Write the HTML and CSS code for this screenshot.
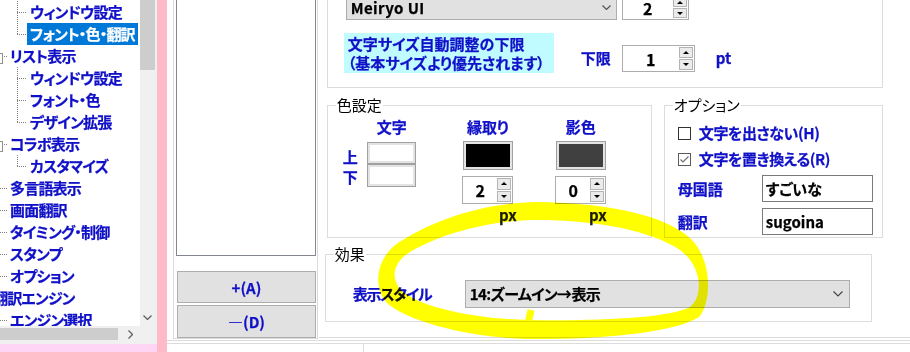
FILE: index.html
```html
<!DOCTYPE html>
<html lang="ja">
<head>
<meta charset="utf-8">
<link rel="stylesheet" href="styles.css">
</head>
<body>
<div class="window">
    <div class="nav">
        <div class="nav-view">
            <div class="tree">
                <div class="row lv2"><span class="elbow"></span><span class="label">ウィンドウ設定</span></div>
                <div class="row lv2"><span class="elbow last"></span><span class="label selected">フォント・色・翻訳</span></div>
                <div class="row lv1"><span class="elbow box"></span><span class="label">リスト表示</span></div>
                <div class="row lv2"><span class="elbow"></span><span class="label">ウィンドウ設定</span></div>
                <div class="row lv2"><span class="elbow"></span><span class="label">フォント・色</span></div>
                <div class="row lv2"><span class="elbow last"></span><span class="label">デザイン拡張</span></div>
                <div class="row lv1"><span class="elbow box"></span><span class="label">コラボ表示</span></div>
                <div class="row lv2"><span class="elbow last"></span><span class="label">カスタマイズ</span></div>
                <div class="row lv1"><span class="elbow"></span><span class="label">多言語表示</span></div>
                <div class="row lv1"><span class="elbow"></span><span class="label">画面翻訳</span></div>
                <div class="row lv1"><span class="elbow"></span><span class="label">タイミング・制御</span></div>
                <div class="row lv1"><span class="elbow"></span><span class="label">スタンプ</span></div>
                <div class="row lv1"><span class="elbow last"></span><span class="label">オプション</span></div>
                <div class="row lv0"><span class="label">翻訳エンジン</span></div>
                <div class="row lv1"><span class="elbow"></span><span class="label">エンジン選択</span></div>
            </div>
            <div class="vscroll">
                <div class="vthumb"></div>
                <svg class="vdown" width="9" height="5" viewBox="0 0 9 5"><polyline points="0.5,0.5 4.5,4.5 8.5,0.5" fill="none" stroke="#606060" stroke-width="1.3"/></svg>
            </div>
        </div>
        <div class="hscroll">
            <div class="htrack">
                <div class="hthumb"></div>
                <svg class="hright" width="5" height="9" viewBox="0 0 5 9"><polyline points="0.5,0.5 4.5,4.5 0.5,8.5" fill="none" stroke="#606060" stroke-width="1.3"/></svg>
            </div>
            <div class="corner"></div>
        </div>
        <div class="nav-foot"></div>
    </div>

    <div class="splitter"></div>

    <div class="main">
        <div class="main-top">
            <div class="side">
                <div class="listbox"></div>
                <button class="btn btn-add">+(A)</button>
                <button class="btn">―(D)</button>
            </div>

            <div class="settings">
                <div class="group font-group">
                    <div class="font-row">
                        <div class="combo font-combo">
                            <span>Meiryo UI</span>
                            <svg width="9" height="5" viewBox="0 0 9 5"><polyline points="0.5,0.5 4.5,4.5 8.5,0.5" fill="none" stroke="#555" stroke-width="1.2"/></svg>
                        </div>
                        <div class="spin spin-size">
                            <span class="spin-val">2</span>
                            <span class="spin-btns"><i class="up"></i><i class="down"></i></span>
                        </div>
                    </div>
                    <div class="limit-row">
                        <div class="note">文字サイズ自動調整の下限<br>（基本サイズより優先されます）</div>
                        <span class="text limit-label">下限</span>
                        <div class="spin spin-limit">
                            <span class="spin-val">1</span>
                            <span class="spin-btns"><i class="up"></i><i class="down"></i></span>
                        </div>
                        <span class="text unit-pt">pt</span>
                    </div>
                </div>

                <div class="group-row">
                    <div class="group color-group">
                        <div class="group-title">色設定</div>
                        <div class="color-grid">
                            <div class="col col-side">
                                <span class="text">上</span>
                                <span class="text">下</span>
                            </div>
                            <div class="col col-text">
                                <span class="text">文字</span>
                                <span class="swatch sw-top"><i class="fill white"></i></span>
                                <span class="swatch sw-bottom"><i class="fill white"></i></span>
                            </div>
                            <div class="col col-edge">
                                <span class="text">縁取り</span>
                                <span class="swatch sw-big"><i class="fill black"></i></span>
                                <div class="spin spin-small">
                                    <span class="spin-val">2</span>
                                    <span class="spin-btns"><i class="up"></i><i class="down"></i></span>
                                </div>
                                <span class="unit-px px-edge">px</span>
                            </div>
                            <div class="col col-shadow">
                                <span class="text">影色</span>
                                <span class="swatch sw-big"><i class="fill dark"></i></span>
                                <div class="spin spin-small">
                                    <span class="spin-val">0</span>
                                    <span class="spin-btns"><i class="up"></i><i class="down"></i></span>
                                </div>
                                <span class="unit-px px-shadow">px</span>
                            </div>
                        </div>
                    </div>

                    <div class="group option-group">
                        <div class="group-title">オプション</div>
                        <div class="option-list">
                            <div class="check-row first">
                                <span class="checkbox"></span>
                                <span class="text">文字を出さない(H)</span>
                            </div>
                            <div class="check-row">
                                <span class="checkbox checked">
                                    <svg width="11" height="11" viewBox="0 0 11 11"><polyline points="1.5,5.5 4,8 9.5,2.5" fill="none" stroke="#6d6d6d" stroke-width="1.1"/></svg>
                                </span>
                                <span class="text">文字を置き換える(R)</span>
                            </div>
                            <div class="field-row">
                                <span class="text field-label">母国語</span>
                                <div class="textbox">すごいな</div>
                            </div>
                            <div class="field-row">
                                <span class="text field-label">翻訳</span>
                                <div class="textbox">sugoina</div>
                            </div>
                        </div>
                    </div>
                </div>

                <div class="group effect-group">
                    <div class="group-title">効果</div>
                    <div class="effect-row">
                        <span class="text effect-label">表示スタイル</span>
                        <div class="combo effect-combo">
                            <span>14:ズームイン→表示</span>
                            <svg width="10" height="6" viewBox="0 0 10 6"><polyline points="0.5,0.5 5,5 9.5,0.5" fill="none" stroke="#444" stroke-width="1.2"/></svg>
                        </div>
                    </div>
                </div>
            </div>
        </div>

        <div class="status">
            <div class="status-cell"></div>
            <div class="status-cell wide"></div>
        </div>
    </div>
</div>

<svg class="marker" width="910" height="352" viewBox="0 0 910 352">
    <path fill="#ffff00" fill-rule="evenodd" d="M 537 202
        C 600 203, 660 212, 690 238
        C 712 258, 712 300, 700 316
        C 680 332, 600 340, 530 339
        C 470 338, 410 322, 388 304
        C 372 288, 376 258, 398 243
        C 430 222, 480 203, 537 202 Z
        M 537 220
        C 595 220, 650 230, 680 250
        C 702 266, 704 296, 690 307
        C 670 318, 600 321, 530 320
        C 470 319, 420 306, 403 292
        C 390 280, 392 263, 410 252
        C 440 234, 490 220, 537 220 Z"/>
    <path d="M 528 324 L 531 310" stroke="#ffff00" stroke-width="7" fill="none"/>
</svg>
</body>
</html>
```

FILE: styles.css
```css
*
{
    box-sizing: border-box;
}

body
{
    margin: 0;
    width: 910px;
    height: 352px;
    overflow: hidden;
    background: #ffffff;
    font-family: "Noto Sans CJK JP", "Noto Sans", sans-serif;
    font-size: 15px;
    line-height: 20px;
    font-feature-settings: "palt" 1;
}

.window
{
    display: flex;
    height: 352px;
}

/* left tree */

.nav
{
    width: 157px;
    flex: none;
    display: flex;
    flex-direction: column;
}

.nav-view
{
    display: flex;
    height: 326px;
}

.tree
{
    width: 140px;
    padding-top: 1px;
    overflow: hidden;
    background: #ffffff;
}

.row
{
    display: flex;
    align-items: center;
    height: 22px;
    white-space: nowrap;
}

.elbow
{
    position: relative;
    flex: none;
    width: 10px;
    height: 22px;
    background:
        repeating-linear-gradient(to bottom, #808080 0 1px, transparent 1px 2px) left top / 1px 100% no-repeat,
        repeating-linear-gradient(to right, #808080 0 1px, transparent 1px 2px) left 11px / 100% 1px no-repeat;
}

.elbow.last
{
    background-size: 1px 12px, 100% 1px;
}

.elbow.box::after
{
    content: "";
    position: absolute;
    left: -6px;
    top: 8px;
    width: 9px;
    height: 9px;
    border: 1px solid #919191;
    background: #ffffff;
}

.lv2 .elbow
{
    margin-left: 17px;
}

.lv1 .elbow
{
    margin-left: -2px;
    width: 9px;
}

.lv0 .label
{
    margin-left: -10px;
}

.label
{
    height: 22px;
    padding: 0 3px;
    line-height: 22px;
    font-weight: bold;
    letter-spacing: -0.8px;
    color: #1010c8;
    -webkit-text-stroke: 0.25px currentColor;
}

.label.selected
{
    background: #0078d7;
    color: #ffffff;
}

.vscroll
{
    width: 17px;
    display: flex;
    flex-direction: column;
    background: #f0f0f0;
}

.vthumb
{
    width: 15px;
    height: 70px;
    background: #cdcdcd;
}

.vdown
{
    margin: auto 0 6px 3px;
}

.hscroll
{
    display: flex;
    height: 16px;
}

.htrack
{
    width: 140px;
    display: flex;
    align-items: center;
    background: #f0f0f0;
}

.hthumb
{
    width: 118px;
    height: 12px;
    background: #cdcdcd;
}

.hright
{
    margin-left: 10px;
}

.corner
{
    width: 17px;
    background: #f0f0f0;
}

.nav-foot
{
    flex: 1;
    background: linear-gradient(#f0f0f0 0 2px, #ffd5f5 2px);
}

.splitter
{
    width: 10px;
    flex: none;
    background: #ffbac8;
}

/* main */

.main
{
    width: 743px;
    display: flex;
    flex-direction: column;
}

.main-top
{
    display: flex;
    height: 341px;
    border-bottom: 1px solid #dcdcdc;
}

.side
{
    margin-left: 6px;
    width: 145px;
    height: 339px;
    padding-left: 2px;
    border: 1px solid #dadada;
    border-top: none;
}

.listbox
{
    width: 140px;
    height: 256px;
    border: 1px solid #828790;
    border-top: none;
    background: #ffffff;
}

.btn
{
    display: block;
    width: 139px;
    margin-left: 1px;
    padding: 0;
    background: #e1e1e1;
    border: 1px solid #adadad;
    font-family: inherit;
    font-size: 15px;
    font-weight: bold;
    font-feature-settings: normal;
    color: #1010c8;
    -webkit-text-stroke: 0.25px currentColor;
}

.btn-add
{
    height: 32px;
    margin-top: 15px;
    margin-bottom: 2px;
}

.btn + .btn
{
    height: 33px;
}

.settings
{
    width: 592px;
    height: 338px;
    margin-left: 1px;
    border-bottom: 1px solid #dcdcdc;
}

.text
{
    font-weight: bold;
    color: #1010c8;
    white-space: nowrap;
    -webkit-text-stroke: 0.25px currentColor;
}

.group
{
    border: 1px solid #dcdcdc;
    display: flex;
    flex-direction: column;
}

.group-title
{
    width: fit-content;
    height: 20px;
    margin: -11px 0 0 8px;
    padding: 0 1px;
    background: #ffffff;
    color: #000000;
}

/* font group */

.font-group
{
    margin-left: 8px;
    width: 556px;
    height: 88px;
    border-top: none;
}

.font-row
{
    display: flex;
    margin-top: -5px;
    padding-left: 18px;
}

.combo
{
    display: flex;
    align-items: center;
    background: #e1e1e1;
    border: 1px solid #adadad;
    padding-left: 4px;
    font-weight: bold;
    color: #000000;
    white-space: nowrap;
    -webkit-text-stroke: 0.25px currentColor;
}

.combo svg
{
    margin-left: auto;
}

.font-combo
{
    width: 271px;
    height: 25px;
    letter-spacing: 0.4px;
}

.font-combo svg
{
    margin-right: 5px;
}

.spin
{
    display: flex;
    background: #ffffff;
    border: 1px solid #adadad;
}

.spin-val
{
    flex: 1;
    text-align: center;
    align-self: center;
    font-weight: bold;
    font-size: 16px;
    color: #000000;
    -webkit-text-stroke: 0.25px currentColor;
}

.spin-btns
{
    width: 15px;
    display: flex;
    flex-direction: column;
    gap: 1px;
    padding: 1px 1px 1px 0;
}

.spin-btns i
{
    flex: 1;
    display: flex;
    align-items: center;
    justify-content: center;
    background: #ebebeb;
    border: 1px solid #b4b4b4;
}

.spin-btns .up::after
{
    content: "";
    border-left: 3px solid transparent;
    border-right: 3px solid transparent;
    border-bottom: 3px solid #000000;
}

.spin-btns .down::after
{
    content: "";
    border-left: 3px solid transparent;
    border-right: 3px solid transparent;
    border-top: 3px solid #000000;
}

.spin-size
{
    width: 67px;
    height: 25px;
    margin-left: 5px;
}

.limit-row
{
    display: flex;
    align-items: flex-start;
    margin-top: 13px;
    padding-left: 16px;
}

.note
{
    width: 210px;
    height: 40px;
    padding: 1px 0 0 4px;
    line-height: 19px;
    background: #c0fcff;
    font-weight: bold;
    color: #1010c8;
    white-space: nowrap;
    -webkit-text-stroke: 0.25px currentColor;
}

.limit-label
{
    margin: 15px 0 0 27px;
}

.spin-limit
{
    width: 73px;
    height: 27px;
    margin: 12px 0 0 11px;
}

.unit-pt
{
    margin: 15px 0 0 21px;
}

/* color + option */

.group-row
{
    display: flex;
    margin-top: 17px;
}

.color-group
{
    margin-left: 8px;
    width: 325px;
    height: 133px;
}

.color-grid
{
    display: flex;
    margin-top: 2px;
}

.col
{
    display: flex;
    flex-direction: column;
    align-items: center;
}

.col-side
{
    width: 34px;
    padding-left: 15px;
    padding-top: 30px;
    align-items: flex-start;
}

.col-text
{
    width: 60px;
}

.col-edge
{
    width: 132px;
}

.col-shadow
{
    width: 54px;
}

.swatch
{
    display: flex;
    padding: 2px;
    background: #e3e3e3;
    border: 1px solid #a0a0a0;
}

.swatch .fill
{
    flex: 1;
}

.fill.white
{
    background: #ffffff;
}

.fill.black
{
    background: #000000;
}

.fill.dark
{
    background: #404040;
}

.sw-top
{
    width: 49px;
    height: 22px;
    margin-top: 5px;
}

.sw-bottom
{
    width: 49px;
    height: 23px;
}

.sw-big
{
    width: 50px;
    height: 29px;
    margin-top: 4px;
}

.spin-small
{
    width: 51px;
    height: 28px;
    margin-top: 6px;
}

.unit-px
{
    margin-top: 1px;
    font-weight: bold;
    color: #1a1a1a;
    -webkit-text-stroke: 0.25px currentColor;
}

.px-edge
{
    margin-left: 40px;
}

.px-shadow
{
    margin-left: 34px;
}

.option-group
{
    margin-left: 12px;
    width: 219px;
    height: 133px;
}

.option-list
{
    padding-left: 13px;
}

.check-row
{
    display: flex;
    align-items: center;
    height: 20px;
    margin-top: 6px;
    letter-spacing: -0.4px;
}

.check-row.first
{
    margin-top: 8px;
}

.checkbox
{
    width: 13px;
    height: 13px;
    margin-right: 8px;
    border: 1px solid #333333;
    background: #ffffff;
}

.checkbox.checked
{
    border-color: #5a5a5a;
}

.checkbox svg
{
    display: block;
}

.field-row
{
    display: flex;
    align-items: center;
    margin-top: 6px;
}

.field-label
{
    width: 84px;
}

.textbox
{
    width: 111px;
    height: 27px;
    padding-left: 3px;
    line-height: 25px;
    border: 1px solid #7a7a7a;
    font-weight: bold;
    color: #000000;
    -webkit-text-stroke: 0.25px currentColor;
}

/* effect */

.effect-group
{
    margin: 16px 0 0 6px;
    width: 547px;
    height: 68px;
}

.effect-row
{
    display: flex;
    align-items: center;
    margin-top: 16px;
    padding-left: 27px;
}

.effect-label
{
    width: 112px;
    letter-spacing: -1.2px;
}

.effect-combo
{
    width: 385px;
    height: 28px;
    letter-spacing: -0.6px;
}

.effect-combo svg
{
    margin-right: 6px;
}

.status
{
    flex: 1;
    display: flex;
    margin-top: 2px;
    border-top: 1px solid #dcdcdc;
}

.status-cell
{
    width: 197px;
    border-right: 1px solid #dcdcdc;
}

.status-cell.wide
{
    flex: 1;
    border-right: none;
}

.marker
{
    position: absolute;
    left: 0;
    top: 0;
    pointer-events: none;
    mix-blend-mode: multiply;
}
```
